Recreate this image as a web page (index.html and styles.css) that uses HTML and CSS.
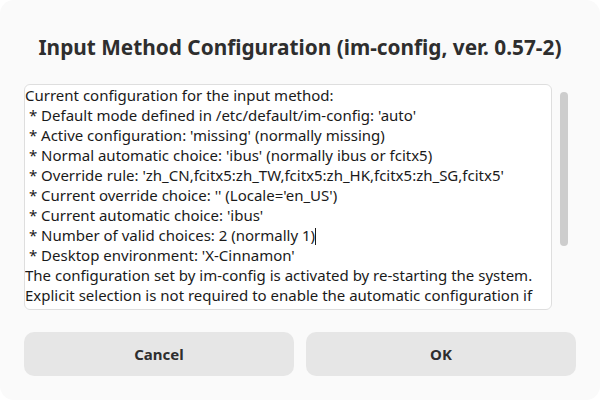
FILE: index.html
```html
<!DOCTYPE html>
<html>
<head>
<meta charset="utf-8">
<link rel="stylesheet" href="styles.css">
</head>
<body>
<div class="dialog">
  <h1 class="title">Input Method Configuration (im-config, ver. 0.57-2)</h1>
  <div class="content">
    <div class="textbox"><div class="text">Current configuration for the input method:
 * Default mode defined in /etc/default/im-config: 'auto'
 * Active configuration: 'missing' (normally missing)
 * Normal automatic choice: 'ibus' (normally ibus or fcitx5)
 * Override rule: 'zh_CN,fcitx5:zh_TW,fcitx5:zh_HK,fcitx5:zh_SG,fcitx5'
 * Current override choice: '' (Locale='en_US')
 * Current automatic choice: 'ibus'
 * Number of valid choices: 2 (normally 1)<span class="caret"></span>
 * Desktop environment: 'X-Cinnamon'
The configuration set by im-config is activated by re-starting the system.
Explicit selection is not required to enable the automatic configuration if</div></div>
    <div class="scroll"><div class="thumb"></div></div>
  </div>
  <div class="buttons">
    <button class="btn">Cancel</button>
    <button class="btn">OK</button>
  </div>
</div>
</body>
</html>
```
FILE: styles.css
```css
html, body {
  margin: 0;
  padding: 0;
  background: #ffffff;
}
.dialog {
  width: 600px;
  height: 400px;
  box-sizing: border-box;
  background: #fafafa;
  border-radius: 14px;
  padding: 0 24px;
  display: flex;
  flex-direction: column;
  font-family: "Noto Sans", "Open Sans", sans-serif;
  overflow: hidden;
}
.title {
  margin: 33px 0 0 0;
  font-size: 20.8px;
  font-weight: bold;
  line-height: 28px;
  text-align: center;
  color: #2e2e2e;
}
.content {
  margin-top: 23px;
  display: flex;
  height: 226px;
}
.textbox {
  width: 528px;
  box-sizing: border-box;
  background: #ffffff;
  border: 1px solid #dedede;
  border-radius: 6px;
  overflow: hidden;
}
.text {
  white-space: pre;
  font-size: 15px;
  line-height: 20px;
  color: #1a1a1a;
  padding: 0;
}
.caret {
  display: inline-block;
  width: 1px;
  height: 17px;
  background: #1a1a1a;
  vertical-align: -4px;
}
.scroll {
  margin-left: 8px;
  padding-top: 8px;
}
.thumb {
  width: 8px;
  height: 154px;
  background: #cdcdcd;
  border-radius: 4px;
}
.buttons {
  margin-top: 22px;
  display: flex;
  gap: 12px;
}
.btn {
  flex: 1;
  height: 44px;
  border: none;
  border-radius: 10px;
  background: #e6e6e6;
  font-family: "Noto Sans", "Open Sans", sans-serif;
  font-size: 15px;
  font-weight: bold;
  color: #2e2e2e;
}
```
